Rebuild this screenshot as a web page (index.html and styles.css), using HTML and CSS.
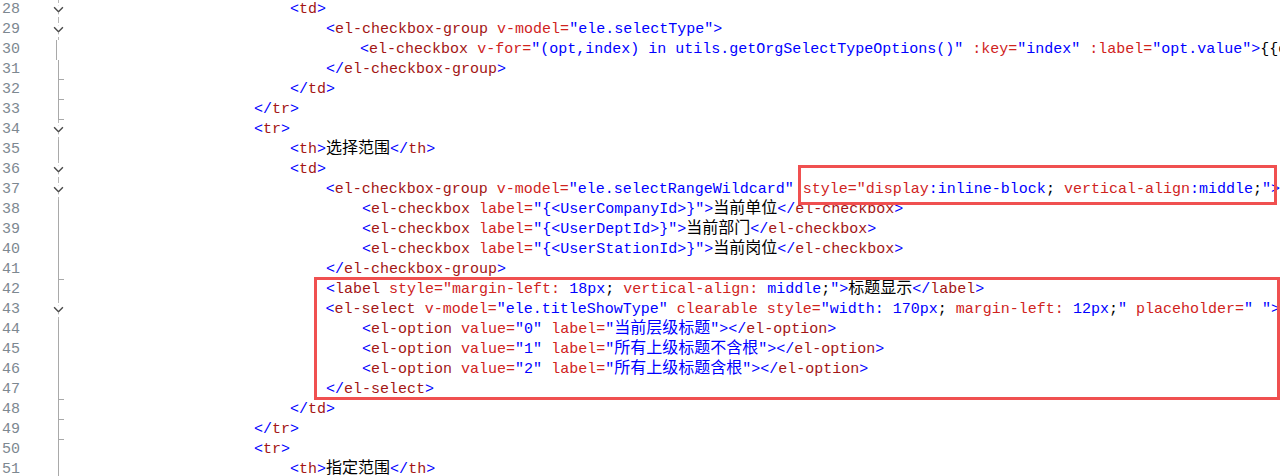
FILE: index.html
```html
<!DOCTYPE html>
<html lang="zh">
<head>
  <meta charset="UTF-8">
  <title>Editor</title>
  <link rel="stylesheet" href="styles.css">
</head>
<body>
  <div class="editor">
    <div class="line"><span class="ln">28</span><span class="fold open"><svg viewBox="0 0 10 6"><path d="M1 1 L5 5 L9 1"/></svg></span><span class="code">                        <b class="d">&lt;</b><b class="t">td</b><b class="d">&gt;</b></span></div>
    <div class="line"><span class="ln">29</span><span class="fold open"><svg viewBox="0 0 10 6"><path d="M1 1 L5 5 L9 1"/></svg></span><span class="code">                            <b class="d">&lt;</b><b class="t">el-checkbox-group</b> <b class="a">v-model=</b><b class="v">"ele.selectType"</b><b class="d">&gt;</b></span></div>
    <div class="line"><span class="ln">30</span><span class="fold"></span><span class="code">                                <b class="d">&lt;</b><b class="t">el-checkbox</b> <b class="a">v-for=</b><b class="v">"(opt,index) in utils.getOrgSelectTypeOptions()"</b> <b class="a">:key=</b><b class="v">"index"</b> <b class="a">:label=</b><b class="v">"opt.value"</b><b class="d">&gt;</b><b class="x">{{opt.label}}</b></span></div>
    <div class="line"><span class="ln">31</span><span class="fold end"></span><span class="code">                            <b class="d">&lt;/</b><b class="t">el-checkbox-group</b><b class="d">&gt;</b></span></div>
    <div class="line"><span class="ln">32</span><span class="fold end"></span><span class="code">                        <b class="d">&lt;/</b><b class="t">td</b><b class="d">&gt;</b></span></div>
    <div class="line"><span class="ln">33</span><span class="fold end"></span><span class="code">                    <b class="d">&lt;/</b><b class="t">tr</b><b class="d">&gt;</b></span></div>
    <div class="line"><span class="ln">34</span><span class="fold open"><svg viewBox="0 0 10 6"><path d="M1 1 L5 5 L9 1"/></svg></span><span class="code">                    <b class="d">&lt;</b><b class="t">tr</b><b class="d">&gt;</b></span></div>
    <div class="line"><span class="ln">35</span><span class="fold"></span><span class="code">                        <b class="d">&lt;</b><b class="t">th</b><b class="d">&gt;</b><b class="x zh">选择范围</b><b class="d">&lt;/</b><b class="t">th</b><b class="d">&gt;</b></span></div>
    <div class="line"><span class="ln">36</span><span class="fold open"><svg viewBox="0 0 10 6"><path d="M1 1 L5 5 L9 1"/></svg></span><span class="code">                        <b class="d">&lt;</b><b class="t">td</b><b class="d">&gt;</b></span></div>
    <div class="line"><span class="ln">37</span><span class="fold open"><svg viewBox="0 0 10 6"><path d="M1 1 L5 5 L9 1"/></svg></span><span class="code">                            <b class="d">&lt;</b><b class="t">el-checkbox-group</b> <b class="a">v-model=</b><b class="v">"ele.selectRangeWildcard"</b> <b class="a">style="display</b><b class="v">:inline-block</b><b class="x">;</b> <b class="a">vertical-align</b><b class="v">:middle</b><b class="x">;</b><b class="v">"</b><b class="d">&gt;</b></span></div>
    <div class="line"><span class="ln">38</span><span class="fold"></span><span class="code">                                <b class="d">&lt;</b><b class="t">el-checkbox</b> <b class="a">label=</b><b class="v">"{&lt;UserCompanyId&gt;}"</b><b class="d">&gt;</b><b class="x zh">当前单位</b><b class="d">&lt;/</b><b class="t">el-checkbox</b><b class="d">&gt;</b></span></div>
    <div class="line"><span class="ln">39</span><span class="fold"></span><span class="code">                                <b class="d">&lt;</b><b class="t">el-checkbox</b> <b class="a">label=</b><b class="v">"{&lt;UserDeptId&gt;}"</b><b class="d">&gt;</b><b class="x zh">当前部门</b><b class="d">&lt;/</b><b class="t">el-checkbox</b><b class="d">&gt;</b></span></div>
    <div class="line"><span class="ln">40</span><span class="fold"></span><span class="code">                                <b class="d">&lt;</b><b class="t">el-checkbox</b> <b class="a">label=</b><b class="v">"{&lt;UserStationId&gt;}"</b><b class="d">&gt;</b><b class="x zh">当前岗位</b><b class="d">&lt;/</b><b class="t">el-checkbox</b><b class="d">&gt;</b></span></div>
    <div class="line"><span class="ln">41</span><span class="fold end"></span><span class="code">                            <b class="d">&lt;/</b><b class="t">el-checkbox-group</b><b class="d">&gt;</b></span></div>
    <div class="line"><span class="ln">42</span><span class="fold"></span><span class="code">                            <b class="d">&lt;</b><b class="t">label</b> <b class="a">style="margin-left:</b> <b class="v">18px</b><b class="x">;</b> <b class="a">vertical-align:</b> <b class="v">middle</b><b class="x">;</b><b class="v">"</b><b class="d">&gt;</b><b class="x zh">标题显示</b><b class="d">&lt;/</b><b class="t">label</b><b class="d">&gt;</b></span></div>
    <div class="line"><span class="ln">43</span><span class="fold open"><svg viewBox="0 0 10 6"><path d="M1 1 L5 5 L9 1"/></svg></span><span class="code">                            <b class="d">&lt;</b><b class="t">el-select</b> <b class="a">v-model=</b><b class="v">"ele.titleShowType"</b> <b class="a">clearable</b> <b class="a">style=</b><b class="v">"width:</b> <b class="v">170px</b><b class="x">;</b> <b class="a">margin-left:</b> <b class="v">12px</b><b class="x">;</b><b class="v">"</b> <b class="a">placeholder=</b><b class="v">" "</b><b class="d">&gt;</b></span></div>
    <div class="line"><span class="ln">44</span><span class="fold"></span><span class="code">                                <b class="d">&lt;</b><b class="t">el-option</b> <b class="a">value=</b><b class="v">"0"</b> <b class="a">label=</b><b class="v">"<b class="zh">当前层级标题</b>"</b><b class="d">&gt;&lt;/</b><b class="t">el-option</b><b class="d">&gt;</b></span></div>
    <div class="line"><span class="ln">45</span><span class="fold"></span><span class="code">                                <b class="d">&lt;</b><b class="t">el-option</b> <b class="a">value=</b><b class="v">"1"</b> <b class="a">label=</b><b class="v">"<b class="zh">所有上级标题不含根</b>"</b><b class="d">&gt;&lt;/</b><b class="t">el-option</b><b class="d">&gt;</b></span></div>
    <div class="line"><span class="ln">46</span><span class="fold"></span><span class="code">                                <b class="d">&lt;</b><b class="t">el-option</b> <b class="a">value=</b><b class="v">"2"</b> <b class="a">label=</b><b class="v">"<b class="zh">所有上级标题含根</b>"</b><b class="d">&gt;&lt;/</b><b class="t">el-option</b><b class="d">&gt;</b></span></div>
    <div class="line"><span class="ln">47</span><span class="fold end"></span><span class="code">                            <b class="d">&lt;/</b><b class="t">el-select</b><b class="d">&gt;</b></span></div>
    <div class="line"><span class="ln">48</span><span class="fold end"></span><span class="code">                        <b class="d">&lt;/</b><b class="t">td</b><b class="d">&gt;</b></span></div>
    <div class="line"><span class="ln">49</span><span class="fold end"></span><span class="code">                    <b class="d">&lt;/</b><b class="t">tr</b><b class="d">&gt;</b></span></div>
    <div class="line"><span class="ln">50</span><span class="fold"></span><span class="code">                    <b class="d">&lt;</b><b class="t">tr</b><b class="d">&gt;</b></span></div>
    <div class="line"><span class="ln">51</span><span class="fold"></span><span class="code">                        <b class="d">&lt;</b><b class="t">th</b><b class="d">&gt;</b><b class="x zh">指定范围</b><b class="d">&lt;/</b><b class="t">th</b><b class="d">&gt;</b></span></div>

    <!-- highlight boxes drawn over the code -->
    <div class="mark mark-style"></div>
    <div class="mark mark-select"></div>
  </div>
</body>
</html>
```

FILE: styles.css
```css
body {
  margin: 0;
  background: #fff;
  font-family: 'Liberation Mono', 'DejaVu Sans Mono', monospace;
  font-size: 15px;
  color: #000;
}
.editor {
  position: relative;
  height: 476px;
  overflow: hidden;
}
.line {
  display: flex;
  height: 20px;
  line-height: 20px;
  white-space: pre;
}
.ln {
  width: 20px;
  margin-left: 2px;
  color: #7d8891;
}
.fold {
  position: relative;
  flex: none;
  width: 16px;
  margin-left: 28px;
}
.fold::before {
  content: "";
  position: absolute;
  left: 8px;
  top: 0;
  bottom: 0;
  border-left: 1px solid #a9a9a9;
}
.fold.open::before {
  border-left: 1px dashed #b8b8b8;
}
.fold svg {
  position: absolute;
  left: 3px;
  top: 6px;
  width: 11px;
  height: 7px;
  background: #fff;
  fill: none;
  stroke: #4a4a4a;
  stroke-width: 1.3;
}
.fold.end::after {
  content: "";
  position: absolute;
  left: 8px;
  bottom: 0;
  width: 6px;
  border-top: 1px solid #a9a9a9;
}
.code {
  margin-left: 8px;
}
.code b {
  font-weight: normal;
}
.d { color: #0000ff; }
.t { color: #a31515; }
.a { color: #d0231d; }
.v { color: #0000ff; }
.x { color: #000; }
.zh {
  font-family: 'Noto Sans CJK SC', sans-serif;
  font-size: 16px;
  line-height: 0;
}
.mark {
  position: absolute;
  border: 3px solid #f05050;
}
.mark-style {
  left: 798px;
  top: 165px;
  width: 473px;
  height: 34px;
}
.mark-select {
  left: 314px;
  top: 277px;
  width: 960px;
  height: 117px;
}
```
